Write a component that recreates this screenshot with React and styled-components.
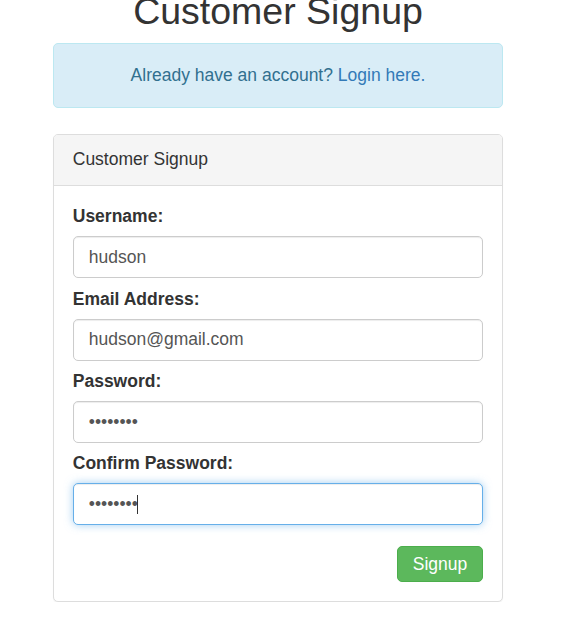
import React from 'react';
import styled, { createGlobalStyle } from 'styled-components';

const GlobalStyle = createGlobalStyle`
  body {
    margin: 0;
    background: #fff;
    font-family: 'Liberation Sans', Arial, sans-serif;
    font-size: 17.5px;
    line-height: 25px;
    color: #333;
  }
  * {
    box-sizing: border-box;
  }
`;

const Container = styled.div`
  width: 450px;
  margin-left: 53px;
`;

const Title = styled.h2`
  margin: -9px 0 11px;
  font-size: 37.5px;
  line-height: 1.1;
  font-weight: 500;
  text-align: center;
  color: #333;
`;

const Alert = styled.div`
  padding: 18.75px;
  margin-bottom: 26px;
  background: #d9edf7;
  border: 1px solid #bce8f1;
  border-radius: 5px;
  color: #31708f;
  text-align: center;

  a {
    color: #337ab7;
    text-decoration: none;
  }
`;

const Panel = styled.div`
  border: 1px solid #ddd;
  border-radius: 5px;
  background: #fff;
  box-shadow: 0 1px 1px rgba(0, 0, 0, 0.05);
`;

const PanelHeading = styled.div`
  padding: 12.5px 18.75px;
  background: #f5f5f5;
  border-bottom: 1px solid #ddd;
  border-radius: 4px 4px 0 0;
  color: #333;
`;

const PanelBody = styled.form`
  padding: 18.5px 18.75px 19.5px;
  display: flex;
  flex-direction: column;
`;

const Group = styled.div`
  display: flex;
  flex-direction: column;
  margin-bottom: ${(p) => (p.last ? '20.5px' : '8.4px')};
`;

const Label = styled.label`
  font-weight: bold;
  margin-bottom: 7px;
`;

const Field = styled.div`
  position: relative;
`;

const Input = styled.input`
  display: block;
  width: 100%;
  height: 42px;
  padding: 0 15px;
  font-family: 'Liberation Sans', Arial, sans-serif;
  font-size: 17.5px;
  color: #555;
  background: #fff;
  border: 1px solid ${(p) => (p.focused ? '#66afe9' : '#ccc')};
  border-radius: 5px;
  outline: none;
  box-shadow: ${(p) =>
    p.focused
      ? 'inset 0 1px 1px rgba(0,0,0,.075), 0 0 8px rgba(102,175,233,.6)'
      : 'inset 0 1px 1px rgba(0,0,0,.075)'};
`;

const Caret = styled.span`
  position: absolute;
  left: 64px;
  top: 12px;
  width: 1px;
  height: 19px;
  background: #333;
`;

const Actions = styled.div`
  display: flex;
  justify-content: flex-end;
`;

const Button = styled.button`
  height: 36px;
  padding: 1px 15px 0;
  font-family: 'Liberation Sans', Arial, sans-serif;
  font-size: 17.5px;
  color: #fff;
  background: #5cb85c;
  border: 1px solid #4cae4c;
  border-radius: 5px;
  cursor: pointer;
`;

const fields = [
  { label: 'Username:', type: 'text', value: 'hudson' },
  { label: 'Email Address:', type: 'text', value: 'hudson@gmail.com' },
  { label: 'Password:', type: 'password', value: 'password' },
  { label: 'Confirm Password:', type: 'password', value: 'password', focused: true },
];

const App = () => {
  return (
    <>
      <GlobalStyle />
      <Container>
        <Title>Customer Signup</Title>
        <Alert>
          Already have an account? <a href='#login'>Login here.</a>
        </Alert>
        <Panel>
          <PanelHeading>Customer Signup</PanelHeading>
          <PanelBody onSubmit={(e) => e.preventDefault()}>
            {fields.map((f, i) => (
              <Group key={f.label} last={i === fields.length - 1}>
                <Label>{f.label}</Label>
                <Field>
                  <Input type={f.type} defaultValue={f.value} focused={f.focused} readOnly />
                  {f.focused && <Caret />}
                </Field>
              </Group>
            ))}
            <Actions>
              <Button type='submit'>Signup</Button>
            </Actions>
          </PanelBody>
        </Panel>
      </Container>
    </>
  );
};

export default App;
